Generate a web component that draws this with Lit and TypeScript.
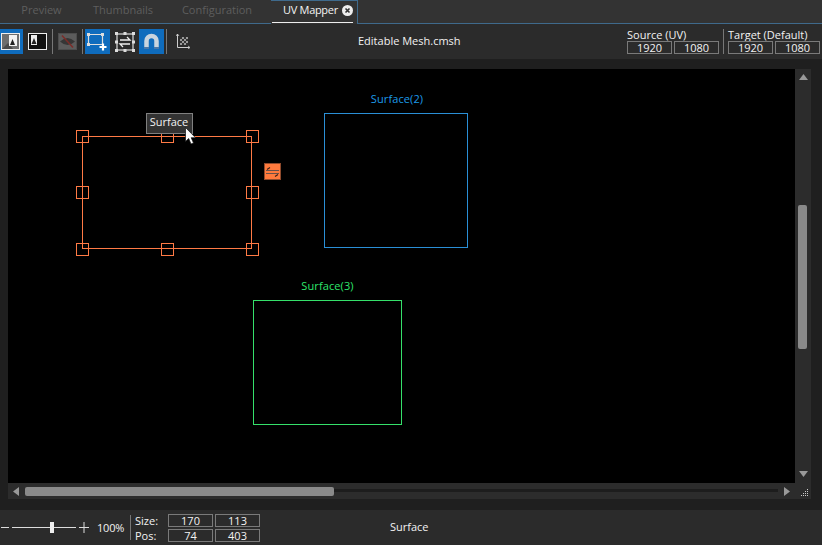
import { html, css, LitElement, svg } from "lit";
import { customElement } from "lit/decorators.js";

const handles = [
  [82, 136], [167, 136], [252, 136],
  [82, 192], [252, 192],
  [82, 249], [167, 249], [252, 249],
];

@customElement("app-root")
export class AppRoot extends LitElement {
  static styles = css`
    :host {
      display: flex;
      flex-direction: column;
      width: 822px;
      height: 545px;
      overflow: hidden;
      background: #1f1f1f;
      font-family: "Open Sans", "Noto Sans", sans-serif;
      font-size: 11px;
      color: #f2f2f2;
    }
    .tabs {
      height: 23px;
      display: flex;
      background: #333;
      border-bottom: 1px solid #3f6a8c;
      flex: none;
    }
    .tab {
      text-align: center;
      line-height: 20px;
      color: #5e5e5e;
      font-size: 11px;
    }
    .tab.first { width: 83px; }
    .tab.second { width: 80px; }
    .tab.third { width: 108px; }
    .tab.active {
      width: 87px;
      margin-bottom: -1px;
      color: #f4f4f4;
      background: #333;
      border-top: 1px solid #3f6a8c;
      border-right: 1px solid #3f6a8c;
      position: relative;
      display: flex;
      align-items: center;
      gap: 4px;
      padding: 0 0 5px 12px;
      box-sizing: border-box;
      height: 24px;
      line-height: 16px;
      letter-spacing: -0.3px;
    }
    .tab.active::after {
      content: "";
      position: absolute;
      left: 1px;
      right: 4px;
      bottom: 1px;
      height: 1px;
      background: #eee;
    }
    .toolbar {
      height: 35px;
      flex: none;
      background: #2b2b2b;
      display: flex;
      align-items: center;
      position: relative;
    }
    .tool {
      width: 25px;
      height: 25px;
      display: flex;
      align-items: center;
      justify-content: center;
      flex: none;
    }
    .tool.on { background: #0f6cbd; }
    .tool svg { display: block; }
    .sep {
      width: 1px;
      height: 25px;
      background: #777;
      flex: none;
    }
    .filename {
      position: absolute;
      left: 358px;
      top: 9px;
      line-height: 15px;
      font-weight: 500;
    }
    .dims {
      margin-left: auto;
      margin-right: 2px;
      display: flex;
      gap: 4px;
    }
    .dim-group { display: flex; flex-direction: column; }
    .dim-group + .dim-group {
      border-left: 1px solid #777;
      padding-left: 4px;
    }
    .dim-label { line-height: 12px; font-size: 11px; }
    .fields { display: flex; gap: 2px; }
    .field {
      width: 43px;
      height: 11px;
      box-sizing: content-box;
      border: 1px solid #7a7a7a;
      background: #2b2b2b;
      text-align: center;
      line-height: 11px;
      font-size: 11px;
    }
    .main {
      flex: none;
      height: 451px;
      padding: 10px 11px 0 8px;
      box-sizing: border-box;
      display: grid;
      grid-template-columns: 787px 16px;
      grid-template-rows: 414px 16px;
    }
    .canvas {
      background: #000;
      position: relative;
    }
    .overlay {
      position: absolute;
      left: -8px;
      top: -69px;
      width: 822px;
      height: 545px;
      pointer-events: none;
    }
    .caption {
      position: absolute;
      transform: translateX(-50%);
      white-space: nowrap;
      line-height: 14px;
      letter-spacing: 0.1px;
    }
    .caption.blue { color: #1c9be8; left: 389px; top: 23px; }
    .caption.green { color: #2ee66c; left: 319.5px; top: 210px; }
    .tooltip {
      position: absolute;
      left: 138px;
      top: 44px;
      width: 47px;
      height: 21px;
      box-sizing: border-box;
      background: #333;
      border: 1px solid #808080;
      text-align: center;
      line-height: 16px;
      padding-right: 1px;
      font-weight: 500;
    }
    .cursor { position: absolute; left: 177px; top: 58px; }
    .swap { position: absolute; left: 256px; top: 94px; }
    .vbar {
      background: #2c2c2c;
      position: relative;
    }
    .vbar .thumb {
      position: absolute;
      left: 3px;
      top: 136px;
      width: 9px;
      height: 144px;
      background: #8a8a8a;
      border-radius: 2px;
    }
    .arrow { position: absolute; }
    .hbar {
      background: #2c2c2c;
      position: relative;
    }
    .hbar .track {
      position: absolute;
      left: 320px;
      right: 17px;
      top: 6px;
      height: 3px;
      background: #1d1d1d;
    }
    .hbar .thumb {
      position: absolute;
      left: 17px;
      top: 4px;
      width: 309px;
      height: 9px;
      background: #8a8a8a;
      border-radius: 2px;
    }
    .grip { background: #2c2c2c; position: relative; }
    .status {
      margin-top: auto;
      height: 35px;
      flex: none;
      background: #2b2b2b;
      display: flex;
      align-items: center;
      position: relative;
    }
    .zoom {
      width: 89px;
      margin-left: 0;
      flex: none;
    }
    .pct { width: 33px; margin-left: 8px; flex: none; font-size: 11px; letter-spacing: -0.2px; }
    .vsep { width: 1px; height: 25px; background: #777; flex: none; margin-right: 4px; }
    .metrics {
      display: grid;
      grid-template-columns: 31px 45px 45px;
      column-gap: 2px;
      row-gap: 2px;
      align-items: center;
    }
    .metrics .lbl { line-height: 13px; font-weight: 500; }
    .surface-name {
      position: absolute;
      left: 390px;
      top: 9px;
      line-height: 15px;
      font-weight: 500;
    }
  `;

  private renderOverlay() {
    const o = "#ff7a45";
    return svg`
      <svg class="overlay" width="822" height="545" viewBox="0 0 822 545" shape-rendering="crispEdges" fill="none">
        <rect x="324.5" y="113.5" width="143" height="134" stroke="#2a8fd6"/>
        <rect x="253.5" y="300.5" width="148" height="124" stroke="#35e06a"/>
        <rect x="82.5" y="136.5" width="169" height="112" stroke="${o}"/>
        ${handles.map(
          ([x, y]) => svg`<rect x="${x - 5.5}" y="${y - 5.5}" width="12" height="12" stroke="${o}"/>`
        )}
      </svg>
    `;
  }

  render() {
    return html`
      <div class="tabs">
        <div class="tab first">Preview</div>
        <div class="tab second">Thumbnails</div>
        <div class="tab third">Configuration</div>
        <div class="tab active">
          <span>UV Mapper</span>
          <svg width="11" height="11" viewBox="0 0 11 11">
            <circle cx="5.5" cy="5.5" r="5.5" fill="#eee"/>
            <path d="M3.5 3.5l4 4M7.5 3.5l-4 4" stroke="#333" stroke-width="1.6"/>
          </svg>
        </div>
      </div>

      <div class="toolbar">
        <div class="tool on" style="width:23px;justify-content:flex-start">
          <svg style="margin-left:1px" width="19" height="17" viewBox="0 0 19 17">
            <rect x="0.5" y="0.5" width="18" height="16" fill="#6e6e6e" stroke="#eee"/>
            <path d="M1 16l6-6 5 6z" fill="#4a4a4a"/>
            <rect x="8" y="2" width="8" height="11" fill="#f2f2f2"/>
            <path d="M9 12l2.500-6 2.500 6z" fill="#222"/>
          </svg>
        </div>
        <div class="tool" style="width:28px">
          <svg width="19" height="17" viewBox="0 0 19 17">
            <rect x="0.5" y="0.5" width="18" height="16" fill="#111" stroke="#eee"/>
            <rect x="3" y="2" width="6" height="10" fill="#eee"/>
            <path d="M3.500 11l2.500-6 2.500 6z" fill="#222"/>
          </svg>
        </div>
        <div class="sep" style="margin:0 2px 0 1px"></div>
        <div class="tool">
          <svg width="19" height="17" viewBox="0 0 19 17" fill="none">
            <rect x="0.5" y="0.5" width="18" height="16" fill="#5c5c5c" stroke="#4d4d4d"/>
            <path d="M2 8.500q7.500-7 15 0q-7.500 7-15 0z" fill="#363636"/>
            <path d="M4 2.500l11 12" stroke="#7c2c28" stroke-width="1.500"/>
          </svg>
        </div>
        <div class="sep" style="margin:0 2px 0 2px"></div>
        <div class="tool on">
          <svg width="21" height="19" viewBox="0 0 21 19" fill="none">
            <path d="M1.500 2.500h14v10h-14z" stroke="#ddd" stroke-width="1.200"/>
            <path d="M0 1h3v3h-3zM14 1h3v3h-3zM0 11h3v3h-3z" fill="#ddd"/>
            <path d="M16 11.500v7M12.500 15h7" stroke="#fff" stroke-width="2.200"/>
          </svg>
        </div>
        <div class="tool" style="width:29px">
          <svg width="20" height="20" viewBox="0 0 20 20" fill="none">
            <rect x="2" y="2" width="16" height="16" stroke="#ddd" stroke-width="1.200"/>
            <path d="M0 0h3v3h-3zM8.500 0h3v3h-3zM17 0h3v3h-3zM0 8.500h3v3h-3zM17 8.500h3v3h-3zM0 17h3v3h-3zM8.500 17h3v3h-3zM17 17h3v3h-3z" fill="#ddd"/>
            <path d="M5 8h10l-3-3M15 12h-10l3 3" stroke="#eee" stroke-width="1.300"/>
          </svg>
        </div>
        <div class="tool on">
          <svg width="17" height="17" viewBox="0 0 17 17" fill="none">
            <path d="M3.500 16v-8a5 5 0 0 1 10 0v8" stroke="#c9d4de" stroke-width="4.500"/>
            <path d="M1 14h5v2h-5zM11 14h5v2h-5z" fill="#4a78a8"/>
          </svg>
        </div>
        <div class="sep" style="margin:0 9px 0 2px"></div>
        <div class="tool" style="width:14px;justify-content:flex-start">
          <svg width="14" height="15" viewBox="0 0 14 15" fill="none">
            <path d="M1.500 0v13.500h12" stroke="#ccc"/>
            <path d="M0 2l1.500-2 1.500 2M12 12l2 1.500-2 1.500" stroke="#ccc" stroke-width=".8"/>
            <rect x="4" y="3" width="8" height="8" fill="#9a9a9a"/>
            <path d="M4 3h2v2h-2zM8 3h2v2h-2zM6 5h2v2h-2zM10 5h2v2h-2zM4 7h2v2h-2zM8 7h2v2h-2zM6 9h2v2h-2zM10 9h2v2h-2z" fill="#333"/>
          </svg>
        </div>
        <div class="filename">Editable Mesh.cmsh</div>
        <div class="dims">
          <div class="dim-group">
            <div class="dim-label">Source (UV)</div>
            <div class="fields">
              <div class="field">1920</div>
              <div class="field">1080</div>
            </div>
          </div>
          <div class="dim-group">
            <div class="dim-label">Target (Default)</div>
            <div class="fields">
              <div class="field">1920</div>
              <div class="field">1080</div>
            </div>
          </div>
        </div>
      </div>

      <div class="main">
        <div class="canvas">
          ${this.renderOverlay()}
          <div class="caption blue">Surface(2)</div>
          <div class="caption green">Surface(3)</div>
          <div class="tooltip">Surface</div>
          <svg class="swap" width="17" height="17" viewBox="0 0 17 17">
            <rect x="0.5" y="0.5" width="16" height="16" fill="#ff7a3d" stroke="#8f4a2c"/>
            <path d="M2 7.500h13M2 10.500h13" stroke="#6a5048" stroke-width="1"/>
            <path d="M3 6.500l3-2M14 11.500l-3 2" stroke="#3a2018" stroke-width="1.200"/>
          </svg>
          <svg class="cursor" width="11" height="18" viewBox="0 0 11 18">
            <path d="M0.500 0.500v14l3.200-3 2.300 5.500 2.500-1-2.300-5.300h4.300z" fill="#fff" stroke="#111" stroke-width=".7"/>
          </svg>
        </div>
        <div class="vbar">
          <svg class="arrow" style="left:4px;top:5px" width="10" height="7"><path d="M4.500 0l4.500 6h-9z" fill="#999"/></svg>
          <div class="thumb"></div>
          <svg class="arrow" style="left:4px;bottom:5px" width="10" height="7"><path d="M0 0h9l-4.500 6z" fill="#999"/></svg>
        </div>
        <div class="hbar">
          <svg class="arrow" style="left:5px;top:4px" width="7" height="9"><path d="M6 0v9l-6-4.500z" fill="#999"/></svg>
          <div class="track"></div>
          <div class="thumb"></div>
          <svg class="arrow" style="right:4px;top:4px" width="7" height="9"><path d="M0 0v9l6-4.500z" fill="#999"/></svg>
        </div>
        <div class="grip">
          <svg class="arrow" style="left:6px;top:6px" width="8" height="8" fill="#ccc">
            <path d="M6 0h1v1h-1zM4 2h1v1h-1zM6 2h1v1h-1zM2 4h1v1h-1zM4 4h1v1h-1zM6 4h1v1h-1zM0 6h1v1h-1zM2 6h1v1h-1zM4 6h1v1h-1zM6 6h1v1h-1z"/>
          </svg>
        </div>
      </div>

      <div class="status">
        <svg class="zoom" width="89" height="13" viewBox="0 0 89 13" fill="none">
          <path d="M1 6.500h8M12 6.500h64M79 6.500h10M84 1v11" stroke="#ddd"/>
          <rect x="50" y="1" width="4" height="11" fill="#eee"/>
        </svg>
        <div class="pct">100%</div>
        <div class="vsep"></div>
        <div class="metrics">
          <div class="lbl">Size:</div>
          <div class="field">170</div>
          <div class="field">113</div>
          <div class="lbl">Pos:</div>
          <div class="field">74</div>
          <div class="field">403</div>
        </div>
        <div class="surface-name">Surface</div>
      </div>
    `;
  }
}
